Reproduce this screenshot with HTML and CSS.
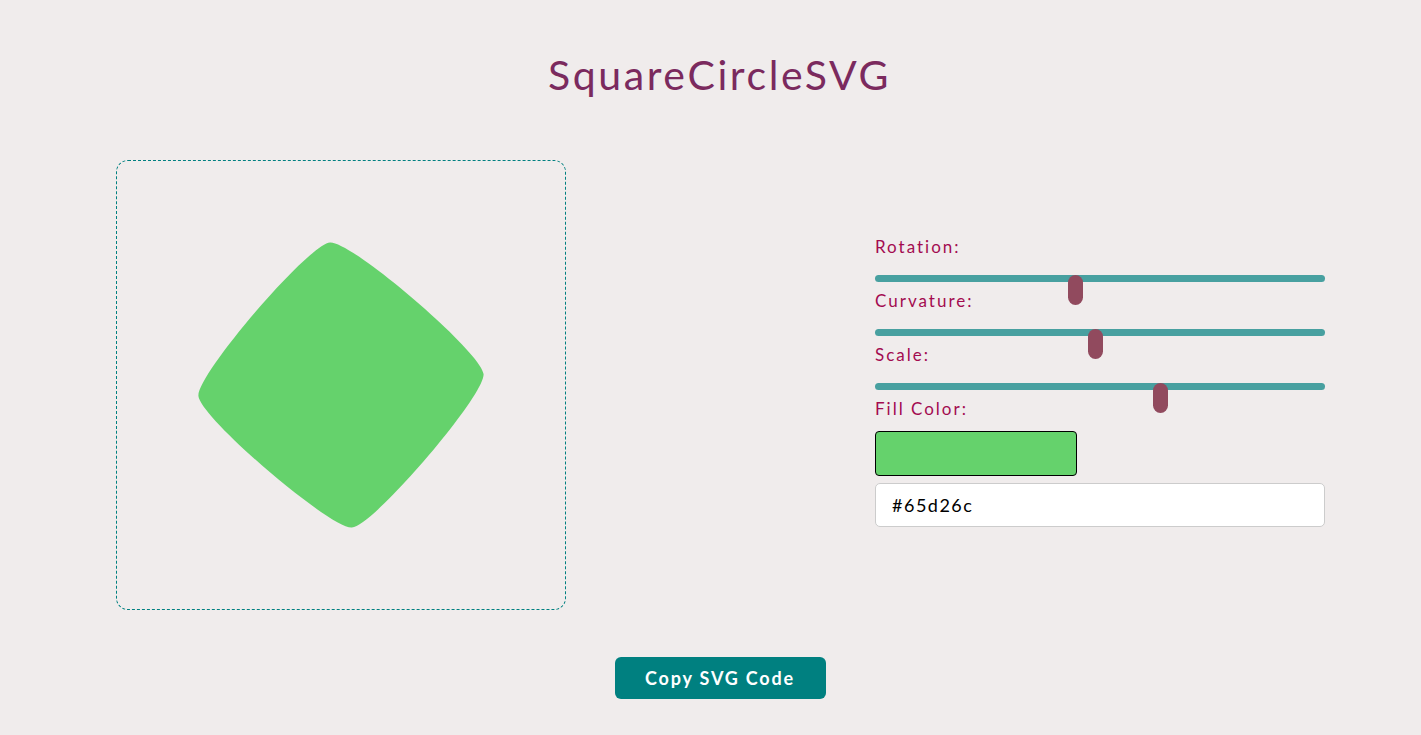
FILE: index.html
```html
<!DOCTYPE html>
<html lang="en">
<head>
<meta charset="utf-8">
<title>SquareCircleSVG</title>
<link rel="stylesheet" href="styles.css">
</head>
<body>
<h1 class="title">SquareCircleSVG</h1>
<main class="workspace">
  <div class="preview">
    <svg class="shape" viewBox="0 0 448 448" xmlns="http://www.w3.org/2000/svg">
      <path transform="rotate(-4.4 224 224)" fill="#65d26c" d="M224 81 C245.5 81 367 202.5 367 224 C367 245.5 245.5 367 224 367 C202.5 367 81 245.5 81 224 C81 202.5 202.5 81 224 81 Z"/>
    </svg>
  </div>
  <div class="controls">
    <div class="control">
      <span class="label">Rotation:</span>
      <div class="slider"><span class="thumb" style="left:192.5px"></span></div>
    </div>
    <div class="control">
      <span class="label">Curvature:</span>
      <div class="slider"><span class="thumb" style="left:212.5px"></span></div>
    </div>
    <div class="control">
      <span class="label">Scale:</span>
      <div class="slider"><span class="thumb" style="left:277.5px"></span></div>
    </div>
    <div class="control color-control">
      <span class="label">Fill Color:</span>
      <div class="swatch"></div>
      <div class="hex-input">#65d26c</div>
    </div>
  </div>
</main>
<div class="actions">
  <button class="copy-btn" type="button">Copy SVG Code</button>
</div>
</body>
</html>
```
FILE: styles.css
```css
html, body {
  margin: 0;
  padding: 0;
}
body {
  background: #f0ecec;
  font-family: Lato, "Noto Sans", sans-serif;
  height: 735px;
  overflow: hidden;
}
.title {
  margin: 50px 0 0;
  padding-left: 18px;
  height: 50px;
  line-height: 50px;
  text-align: center;
  font-size: 41px;
  font-weight: 400;
  letter-spacing: 2.6px;
  color: #7b2a5e;
}
.workspace {
  display: flex;
  align-items: flex-start;
  margin-top: 60px;
  padding-left: 116px;
  gap: 309px;
}
.preview {
  width: 450px;
  height: 450px;
  box-sizing: border-box;
  border: 1px dashed #008080;
  border-radius: 12px;
  flex: none;
}
.shape {
  display: block;
  width: 448px;
  height: 448px;
}
.controls {
  width: 450px;
  margin-top: 77px;
  display: flex;
  flex-direction: column;
}
.control {
  display: flex;
  flex-direction: column;
}
.label {
  display: block;
  height: 20px;
  line-height: 20px;
  font-size: 17px;
  letter-spacing: 2px;
  color: #a30b50;
  margin-bottom: 18px;
}
.slider {
  position: relative;
  height: 7px;
  border-radius: 4px;
  background: #48a0a0;
  margin-bottom: 9px;
}
.thumb {
  position: absolute;
  top: 0;
  width: 15px;
  height: 30px;
  border-radius: 8px;
  background: #914a5e;
  z-index: 1;
}
.color-control .label {
  margin-bottom: 12px;
}
.swatch {
  width: 202px;
  height: 45px;
  box-sizing: border-box;
  border: 1px solid #000;
  border-radius: 4px;
  background: #65d26c;
  margin-bottom: 7px;
}
.hex-input {
  height: 44px;
  box-sizing: border-box;
  border: 1px solid #cccccc;
  border-radius: 5px;
  background: #ffffff;
  padding-left: 16px;
  line-height: 42px;
  font-size: 18px;
  letter-spacing: 1.5px;
  color: #000;
}
.actions {
  display: flex;
  justify-content: center;
  margin-top: 47px;
  padding-left: 19px;
}
.copy-btn {
  width: 211px;
  height: 42px;
  border: none;
  border-radius: 6px;
  background: #008080;
  color: #ffffff;
  font-family: Lato, "Noto Sans", sans-serif;
  font-size: 18px;
  font-weight: 700;
  letter-spacing: 1.8px;
  padding: 0;
}
```
